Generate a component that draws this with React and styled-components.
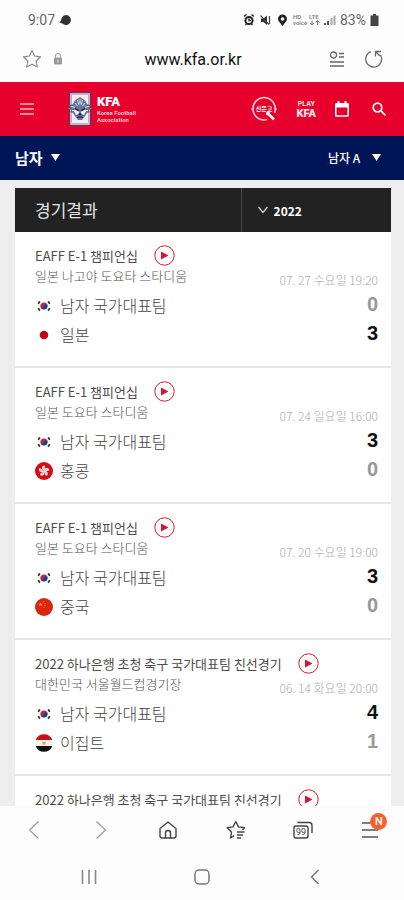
import styled, { createGlobalStyle } from "styled-components";

const colors = {
    red: "#e8002d",
    navy: "#001556",
    dark: "#222222",
    page: "#eeeeee",
    line: "#e6e6e6",
    play: "#d8142c",
};

const matches = [
    {
        id: 1,
        title: "EAFF E-1 챔피언십",
        venue: "일본 나고야 도요타 스타디움",
        date: "07. 27 수요일 19:20",
        teams: [
            { name: "남자 국가대표팀", flag: "kr", score: 0 },
            { name: "일본", flag: "jp", score: 3 },
        ],
    },
    {
        id: 2,
        title: "EAFF E-1 챔피언십",
        venue: "일본 도요타 스타디움",
        date: "07. 24 일요일 16:00",
        teams: [
            { name: "남자 국가대표팀", flag: "kr", score: 3 },
            { name: "홍콩", flag: "hk", score: 0 },
        ],
    },
    {
        id: 3,
        title: "EAFF E-1 챔피언십",
        venue: "일본 도요타 스타디움",
        date: "07. 20 수요일 19:00",
        teams: [
            { name: "남자 국가대표팀", flag: "kr", score: 3 },
            { name: "중국", flag: "cn", score: 0 },
        ],
    },
    {
        id: 4,
        title: "2022 하나은행 초청 축구 국가대표팀 친선경기",
        venue: "대한민국 서울월드컵경기장",
        date: "06. 14 화요일 20:00",
        teams: [
            { name: "남자 국가대표팀", flag: "kr", score: 4 },
            { name: "이집트", flag: "eg", score: 1 },
        ],
    },
    {
        id: 5,
        title: "2022 하나은행 초청 축구 국가대표팀 친선경기",
    },
];

export default function App() {
    return (
        <>
            <GlobalStyle />
            <Screen>
                <StatusBar />
                <AddressBar />
                <SiteHeader />
                <CategoryBar />
                <Content>
                    <ResultsHeader>
                        <ResultsTitle>경기결과</ResultsTitle>
                        <YearField>
                            <ChevronDown />
                            <YearSelect aria-label="연도" defaultValue="2022">
                                <option>2022</option>
                            </YearSelect>
                        </YearField>
                    </ResultsHeader>
                    {matches.map((match) => (
                        <Match key={match.id} {...match} />
                    ))}
                </Content>
                <BrowserToolbar />
                <SystemNav />
            </Screen>
        </>
    );
}

function StatusBar() {
    return (
        <StatusRow>
            <StatusGroup>
                <span>9:07</span>
                <svg width="13" height="12" viewBox="0 0 13 12">
                    <path d="M7 1a5 5 0 1 1-3.6 8.6L.3 8.4l1.9-2A5 5 0 0 1 7 1z" fill="#333" />
                </svg>
            </StatusGroup>
            <StatusGroup>
                <svg width="127" height="14" viewBox="0 0 127 14" aria-hidden="true">
                    {/* alarm */}
                    <g fill="none" stroke="#222">
                        <circle cx="6" cy="7.5" r="3.6" strokeWidth="2" />
                        <path d="M1 3.5 3.5 1.5M11 3.5 8.5 1.5M6 5.5v2h2M2.5 12l1-1M9.5 12l-1-1" strokeWidth="1.4" />
                    </g>
                    {/* muted */}
                    <path d="M18 5.5h2.5L24 2.5v9.5l-3.5-3H18z" fill="#333" />
                    <path d="M17.5 2.5 26 11.5M26.5 3v8" stroke="#444" strokeWidth="1.2" />
                    {/* location */}
                    <path d="M39.5 1.5a4.500 4.500 0 0 1 4.500 4.500c0 2.500-2.500 4-4.500 7-2-3-4.500-4.500-4.500-7a4.500 4.500 0 0 1 4.500-4.500z" fill="#222" />
                    <circle cx="39.5" cy="6" r="1.8" fill="#fff" />
                    <g fill="#777" fontFamily="Roboto, sans-serif" fontSize="6" fontWeight="500">
                        <text x="50" y="6">HD</text>
                        <text x="50" y="12">voice</text>
                        <text x="66" y="6">LTE</text>
                    </g>
                    <path d="M69 7.500v4.500m-2-2 2 2 2-2M74.500 12V7.500m-2 2 2-2 2 2" fill="none" stroke="#777" />
                    <path d="M82 12v-2M85 12V8" stroke="#555" strokeWidth="2" />
                    <path d="M88.500 12V5M91.500 12V2.500" stroke="#aaa" strokeWidth="2" />
                    <text x="97" y="12" fill="#666" fontFamily="Roboto, sans-serif" fontSize="14">83%</text>
                </svg>
                <svg width="9" height="12" viewBox="0 0 9 12">
                    <path d="M3 0h3v1.500h2.500V12h-8V1.500H3z" fill="#444" />
                </svg>
            </StatusGroup>
        </StatusRow>
    );
}

function AddressBar() {
    return (
        <AddressRow>
            <AddressActions>
                <IconButton aria-label="북마크 추가">
                    <svg width="20" height="20" viewBox="0 0 20 20" fill="none" stroke="#8a8a8a" strokeWidth="1.2" strokeLinejoin="round">
                        <path d="M10 1.500 12.600 7l6 .8-4.400 4.200 1.100 6L10 15.200 4.700 18l1.100-6L1.400 7.800l6-.8z" />
                    </svg>
                </IconButton>
                <svg width="10" height="14" viewBox="0 0 10 14" aria-hidden="true">
                    <path d="M2.500 6V4a2.500 2.500 0 0 1 5 0v2" fill="none" stroke="#aaa" strokeWidth="1.2" />
                    <rect x="1" y="5.5" width="8" height="7" rx="1.5" fill="#999" />
                    <path d="M5 7.500v3" stroke="#eee" />
                </svg>
            </AddressActions>
            <AddressInput aria-label="주소" defaultValue="www.kfa.or.kr" />
            <AddressActions $end>
                <IconButton aria-label="리더 모드">
                    <svg width="16" height="18" viewBox="0 0 16 18" fill="none" stroke="#666" strokeWidth="1.3">
                        <circle cx="4.5" cy="5" r="3" />
                        <path d="M10 3.500h5M10 7h5M1 12h14M1 16h14" />
                    </svg>
                </IconButton>
                <IconButton aria-label="새로고침">
                    <svg width="20" height="20" viewBox="0 0 20 20" fill="none" stroke="#666" strokeWidth="1.3">
                        <path d="M7 2.600A8 8 0 1 0 16.500 6" />
                        <path d="M11.500 7.500V2.500h5.500M12 3l4 4" />
                    </svg>
                </IconButton>
            </AddressActions>
        </AddressRow>
    );
}

function SiteHeader() {
    return (
        <HeaderRow>
            <IconButton aria-label="메뉴">
                <svg width="14" height="12" viewBox="0 0 14 12" stroke="#ffb8c2" strokeWidth="1.5">
                    <path d="M0 1h14M0 6h14M0 11h14" />
                </svg>
            </IconButton>
            <Logo href="#home">
                <Crest />
                <LogoText>
                    <strong>KFA</strong>
                    <span>Korea Football</span>
                    <span>Association</span>
                </LogoText>
            </Logo>
            <HeaderActions>
                <IconButton aria-label="신문고">
                    <svg width="26" height="26" viewBox="0 0 26 26" fill="none" stroke="#ffd7dd">
                        <path d="M16 23.600A11.200 11.200 0 1 1 23.500 17" strokeWidth="1.5" />
                        <path d="M0 13h3M23 13h3" />
                        <circle cx="17" cy="17.5" r="2" fill="#fff" stroke="none" />
                        <path d="m18 18.500 5 5" stroke="#fff" strokeWidth="2.5" />
                        <text x="13" y="15" textAnchor="middle" fill="#fff" stroke="none" fontFamily="'Noto Sans CJK KR', sans-serif" fontSize="6" fontWeight="700">신문고</text>
                    </svg>
                </IconButton>
                <PlayKfa href="#play">
                    <span>PLAY</span>
                    <strong>KFA</strong>
                </PlayKfa>
                <IconButton aria-label="일정">
                    <svg width="14" height="16" viewBox="0 0 14 16" fill="#fff">
                        <path d="M0 3.500A1.500 1.500 0 0 1 1.500 2H2.500V0H4.500V2h5V0h2v2h1A1.500 1.500 0 0 1 14 3.500v11a1.300 1.300 0 0 1-1.300 1.300H1.300A1.300 1.300 0 0 1 0 14.500zM1.600 6.500v7.700h10.800V6.500z" />
                    </svg>
                </IconButton>
                <SearchButton aria-label="검색">
                    <svg width="14" height="14" viewBox="0 0 14 14" fill="none" stroke="#fff" strokeWidth="1.7">
                        <circle cx="5.5" cy="5.5" r="4.3" />
                        <path d="m8.700 8.700 4.800 4.800" />
                    </svg>
                </SearchButton>
            </HeaderActions>
        </HeaderRow>
    );
}

function Crest() {
    return (
        <svg width="24" height="34" viewBox="0 0 24 34" aria-hidden="true">
            <rect x="1.7" y=".7" width="20.6" height="32.6" fill="#f4eef2" stroke="#34446e" strokeWidth="1.2" />
            <path d="M3.500 2.500h17v29h-17z" fill="none" stroke="#e98a9c" strokeWidth=".8" />
            <path
                d="M12 5 9 7 6.500 9 5 12l-4 1 1.500 2L0 17l3 1-1 2 3 1 2.500 4L10 28h4l2.500-3L19 21l3-1-1-2 3-1-2.500-2L23 13l-4-1-1.500-3L15 7z"
                fill="#65759a"
            />
            <path
                d="M12 6.500v6M9.500 8l1.200 4.500M14.500 8l-1.200 4.500M7 11l2.500 3M17 11l-2.500 3M3.500 14.500l3.500 1M20.500 14.500l-3.500 1M4 18.500h3M20 18.500h-3"
                stroke="#e3e7f0"
                strokeWidth="1"
            />
            <path d="m7.500 16 3.500 2v4l-3 1-2-4zM16.500 16 13 18v4l3 1 2-4z" fill="#f3f4f8" />
            <path d="m7 16.500 3.800 2.200M17 16.500l-3.800 2.200" stroke="#13204c" strokeWidth="1.6" />
            <path d="M9.800 21.500h4.400L12 24z" fill="#13204c" />
            <path d="M9 25.500q3-1.500 6 0" fill="none" stroke="#13204c" />
        </svg>
    );
}

function CategoryBar() {
    return (
        <CategoryRow>
            <CategoryField>
                <CategorySelect $large aria-label="부문" defaultValue="남자">
                    <option>남자</option>
                </CategorySelect>
                <Caret />
            </CategoryField>
            <CategoryField>
                <CategorySelect aria-label="대표팀" defaultValue="남자 A">
                    <option>남자 A</option>
                </CategorySelect>
                <Caret />
            </CategoryField>
        </CategoryRow>
    );
}

function Match({ title, venue, date, teams }) {
    const best = teams && Math.max(...teams.map((team) => team.score));

    return (
        <MatchCard>
            <TitleRow>
                <MatchTitle>{title}</MatchTitle>
                <IconButton aria-label="영상 보기">
                    <svg width="21" height="21" viewBox="0 0 21 21">
                        <circle cx="10.5" cy="10.5" r="9.7" fill="none" stroke={colors.play} />
                        <path d="M7 6.500v8l7.500-4z" fill={colors.play} />
                    </svg>
                </IconButton>
            </TitleRow>
            {teams && (
                <MatchBody>
                    <div>
                        <Venue>{venue}</Venue>
                        {teams.map((team) => (
                            <Team key={team.name}>
                                <Flag code={team.flag} />
                                {team.name}
                            </Team>
                        ))}
                    </div>
                    <MatchResult>
                        <MatchDate>{date}</MatchDate>
                        {teams.map((team) => (
                            <Score key={team.name} $winner={team.score === best}>
                                {team.score}
                            </Score>
                        ))}
                    </MatchResult>
                </MatchBody>
            )}
        </MatchCard>
    );
}

function Flag({ code }) {
    return (
        <svg width="18" height="18" viewBox="0 0 18 18" aria-hidden="true">
            {code === "kr" && (
                <>
                    <path d="M5.500 9a3.500 3.500 0 0 1 7 0z" fill="#d0203a" />
                    <path d="M5.500 9a3.500 3.500 0 0 0 7 0z" fill="#1b3a94" />
                    <circle cx="7.2" cy="9" r="1.7" fill="#d0203a" />
                    <circle cx="10.8" cy="9" r="1.7" fill="#1b3a94" />
                    <path d="m3.200 6.700 1.700-2.300M14.800 6.700l-1.700-2.300M3.200 11.300l1.700 2.300M14.800 11.300l-1.700 2.300" stroke="#333" strokeWidth="1.8" />
                </>
            )}
            {code === "jp" && <circle cx="9" cy="9" r="4.3" fill="#c4001c" />}
            {code === "hk" && (
                <>
                    <circle cx="9" cy="9" r="9" fill="#d80b10" />
                    {[0, 72, 144, 216, 288].map((angle) => (
                        <g key={angle} transform={`rotate(${angle} 9 9)`}>
                            <path d="M9 9C6 7.500 6.500 4 9.500 3.500 11 5 9.500 6.500 9 9z" fill="#fff" />
                            <path d="M9 8q-1-1.500-.2-3" stroke="#d80b10" strokeWidth=".4" fill="none" />
                        </g>
                    ))}
                </>
            )}
            {code === "cn" && (
                <>
                    <circle cx="9" cy="9" r="9" fill="#dc2410" />
                    <path d="m5.500 4.200.6 1.500h1.600l-1.300 1 .5 1.600-1.400-1-1.400 1 .5-1.600-1.300-1h1.600z" fill="#f6a11b" />
                    <path d="M8.500 3.500h1M9.500 5.500h1M9.500 7.500h1M8.500 9.300h1" stroke="#ee8a1c" />
                </>
            )}
            {code === "eg" && (
                <>
                    <path d="M.6 6a9 9 0 0 1 16.800 0z" fill="#c9101c" />
                    <path d="M.6 6h16.800a9 9 0 0 1 0 6H.6a9 9 0 0 1 0-6z" fill="#f5f3f0" />
                    <path d="M.6 12a9 9 0 0 0 16.800 0z" fill="#111" />
                    <path d="m7 7.500 2 .5 2-.5-.7 3.200H7.700z" fill="#dcae49" />
                </>
            )}
        </svg>
    );
}

function BrowserToolbar() {
    return (
        <Toolbar>
            <IconButton aria-label="뒤로">
                <svg width="12" height="20" viewBox="0 0 12 20" fill="none" stroke="#999" strokeWidth="1.2">
                    <path d="m10.500 1.500-9 8.500 9 8.500" />
                </svg>
            </IconButton>
            <IconButton aria-label="앞으로">
                <svg width="12" height="20" viewBox="0 0 12 20" fill="none" stroke="#999" strokeWidth="1.2">
                    <path d="m1.500 1.500 9 8.500-9 8.500" />
                </svg>
            </IconButton>
            <IconButton aria-label="홈">
                <svg width="18" height="18" viewBox="0 0 18 18" fill="none" stroke="#444" strokeWidth="1.4" strokeLinejoin="round">
                    <path d="M1 7.500 9 1l8 6.500V15a2 2 0 0 1-2 2H3a2 2 0 0 1-2-2z" />
                    <path d="M6.500 17v-5a2.500 2.500 0 0 1 5 0v5" />
                </svg>
            </IconButton>
            <IconButton aria-label="북마크">
                <svg width="20" height="20" viewBox="0 0 20 20" fill="none" stroke="#444" strokeWidth="1.4" strokeLinejoin="round">
                    <path d="M8 15.500 4.500 18l1-6L1.200 7.800l5.800-.9L9.800 1.500l2.700 5.400 6 .9-2 2.200" />
                    <path d="M11 12h7.500M11 15h6M11 18h4" />
                </svg>
            </IconButton>
            <IconButton aria-label="탭 99개">
                <svg width="20" height="18" viewBox="0 0 20 18" fill="none" stroke="#444" strokeWidth="1.4">
                    <rect x="1" y="5" width="14" height="12" rx="2" />
                    <path d="M4.500 1.500H16a3 3 0 0 1 3 3V12" />
                    <text x="8" y="14" textAnchor="middle" fill="#444" stroke="none" fontFamily="Roboto, sans-serif" fontSize="9">99</text>
                </svg>
            </IconButton>
            <MenuButton aria-label="전체 메뉴">
                <svg width="16" height="18" viewBox="0 0 16 18" stroke="#555" strokeWidth="1.4">
                    <path d="M0 2h16M0 9h16M0 16h16" />
                </svg>
                <Badge>N</Badge>
            </MenuButton>
        </Toolbar>
    );
}

function SystemNav() {
    return (
        <SystemRow>
            <IconButton aria-label="최근 앱">
                <svg width="16" height="16" viewBox="0 0 16 16" stroke="#888" strokeWidth="1.6">
                    <path d="M1.500 1v14M8 1v14M14.500 1v14" />
                </svg>
            </IconButton>
            <IconButton aria-label="홈 화면">
                <svg width="16" height="16" viewBox="0 0 16 16" fill="none" stroke="#777" strokeWidth="1.5">
                    <rect x="1" y="1" width="14" height="14" rx="4" />
                </svg>
            </IconButton>
            <IconButton aria-label="이전 화면">
                <svg width="10" height="16" viewBox="0 0 10 16" fill="none" stroke="#777" strokeWidth="1.5">
                    <path d="M8.500 1 1.500 8l7 7" />
                </svg>
            </IconButton>
        </SystemRow>
    );
}

function Caret() {
    return (
        <svg width="9" height="7" viewBox="0 0 9 7" aria-hidden="true">
            <path d="M0 0h9L4.500 7z" fill="#fff" />
        </svg>
    );
}

function ChevronDown() {
    return (
        <svg width="10" height="8" viewBox="0 0 10 8" fill="none" stroke="#ccc" strokeWidth="1.4" aria-hidden="true">
            <path d="m.5 1 4.500 5.500L9.500 1" />
        </svg>
    );
}

const GlobalStyle = createGlobalStyle`
    * {
        box-sizing: border-box;
    }

    body {
        margin: 0;
        background-color: #fdfdfd;
        font-family: "Noto Sans CJK KR", sans-serif;
    }

    button, input, select {
        font-family: inherit;
    }

    svg {
        display: block;
        flex-shrink: 0;
    }
`;

const Screen = styled.div`
    display: flex;
    flex-direction: column;
    height: 100vh;
`;

const IconButton = styled.button`
    display: flex;
    align-items: center;
    justify-content: center;
    flex-shrink: 0;
    padding: 0;
    border: 0;
    background: none;
    cursor: pointer;
`;

const StatusRow = styled.div`
    display: flex;
    flex-shrink: 0;
    align-items: center;
    justify-content: space-between;
    height: 40px;
    padding: 0 25px 0 28px;
    color: #666;
    font: 400 14px Roboto, sans-serif;
`;

const StatusGroup = styled.div`
    display: flex;
    align-items: center;
    gap: 4px;

    svg + svg {
        margin-left: -4px;
    }
`;

const AddressRow = styled.div`
    display: grid;
    flex-shrink: 0;
    grid-template-columns: 60px 1fr 80px;
    align-items: center;
    height: 42px;
    padding: 0 20px 4px 22px;
`;

const AddressActions = styled.div`
    display: flex;
    align-items: center;
    justify-content: ${(props) => (props.$end ? "flex-end" : "flex-start")};
    gap: ${(props) => (props.$end ? "19px" : "11px")};
`;

const AddressInput = styled.input`
    width: 100%;
    min-width: 0;
    padding: 0;
    border: 0;
    outline: 0;
    background: none;
    color: #111;
    text-align: center;

    && {
        font: 400 16px Roboto, sans-serif;
    }
`;

const HeaderRow = styled.header`
    display: flex;
    flex-shrink: 0;
    align-items: center;
    height: 54px;
    padding: 0 14px 0 20px;
    background-color: ${colors.red};
`;

const Logo = styled.a`
    display: flex;
    align-items: center;
    gap: 5px;
    margin-left: 34px;
    color: #fff;
    text-decoration: none;
`;

const LogoText = styled.span`
    display: flex;
    flex-direction: column;
    font: 700 6px / 7px Roboto, sans-serif;

    strong {
        font-size: 13px;
        line-height: 14px;
    }

    span {
        color: #ffc4cd;
    }
`;

const HeaderActions = styled.div`
    display: flex;
    align-items: center;
    gap: 19px;
    margin-left: auto;
`;

const SearchButton = styled(IconButton)`
    width: 22px;
`;

const PlayKfa = styled.a`
    display: flex;
    flex-direction: column;
    align-items: center;
    color: #ffe3e7;
    font: 700 7px / 8px Roboto, sans-serif;
    text-decoration: none;

    strong {
        font-size: 11px;
        line-height: 11px;
    }
`;

const CategoryRow = styled.nav`
    display: flex;
    flex-shrink: 0;
    align-items: center;
    justify-content: space-between;
    height: 44px;
    padding: 0 23px 2px 15px;
    background-color: ${colors.navy};
`;

const CategoryField = styled.label`
    display: flex;
    align-items: center;
    gap: 8px;

    &:last-child {
        gap: 11px;
    }
`;

const PlainSelect = styled.select`
    appearance: none;
    padding: 0;
    border: 0;
    outline: 0;
    background: none;
    color: #fff;
`;

const CategorySelect = styled(PlainSelect)`
    font-size: ${(props) => (props.$large ? "15px" : "12px")};
    font-weight: ${(props) => (props.$large ? 700 : 500)};
`;

const Content = styled.main`
    flex: 1;
    min-height: 0;
    padding: 8px 13px 0 15px;
    overflow-y: auto;
    scrollbar-width: none;
    background-color: ${colors.page};
`;

const ResultsHeader = styled.div`
    display: grid;
    grid-template-columns: 3fr 2fr;
    height: 44px;
    background-color: ${colors.dark};
`;

const ResultsTitle = styled.h1`
    align-self: center;
    margin: 0;
    padding-left: 20px;
    color: #e4e4e4;
    font-size: 17px;
    font-weight: 400;
    line-height: 24px;
`;

const YearField = styled.label`
    display: flex;
    align-items: center;
    gap: 6px;
    padding-left: 16px;
    border-left: 1px solid #484848;
`;

const YearSelect = styled(PlainSelect)`
    font-size: 12px;
    font-weight: 700;
`;

const MatchCard = styled.article`
    height: 136px;
    padding: 13px 13px 0 20px;
    border-bottom: 2px solid ${colors.line};
    background-color: #fff;
`;

const TitleRow = styled.div`
    display: flex;
    align-items: center;
    gap: 16px;
    height: 21px;
`;

const MatchTitle = styled.h2`
    margin: 0;
    color: #4c4c4c;
    font-size: 13px;
    font-weight: 400;
    line-height: 21px;
    white-space: nowrap;
`;

const MatchBody = styled.div`
    display: flex;
    justify-content: space-between;
`;

const Venue = styled.p`
    margin: 0 0 6px;
    color: #555;
    font-size: 13px;
    font-weight: 300;
    line-height: 19px;
`;

const Team = styled.div`
    display: flex;
    align-items: center;
    gap: 7px;
    color: #444;
    font-size: 16px;
    font-weight: 300;
    line-height: 29px;
`;

const MatchResult = styled.div`
    display: flex;
    flex-direction: column;
    align-items: flex-end;
    padding-top: 4px;
`;

const MatchDate = styled.time`
    color: #aaa;
    font-size: 12px;
    font-weight: 300;
    line-height: 20px;
`;

const Score = styled.strong`
    color: ${(props) => (props.$winner ? "#111" : "#999")};
    font: 700 20px / 29px "Liberation Sans", sans-serif;
`;

const Toolbar = styled.nav`
    display: grid;
    flex-shrink: 0;
    grid-template-columns: repeat(6, 1fr);
    height: 48px;
`;

const MenuButton = styled(IconButton)`
    position: relative;
`;

const Badge = styled.span`
    position: absolute;
    top: 7px;
    left: 50%;
    width: 17px;
    height: 17px;
    border-radius: 50%;
    background-color: #f4632d;
    color: #fff;
    font: 500 11px / 17px Roboto, sans-serif;
    text-align: center;
`;

const SystemRow = styled.nav`
    display: grid;
    flex-shrink: 0;
    grid-template-columns: repeat(3, 1fr);
    height: 46px;
    padding: 0 32px;
`;
